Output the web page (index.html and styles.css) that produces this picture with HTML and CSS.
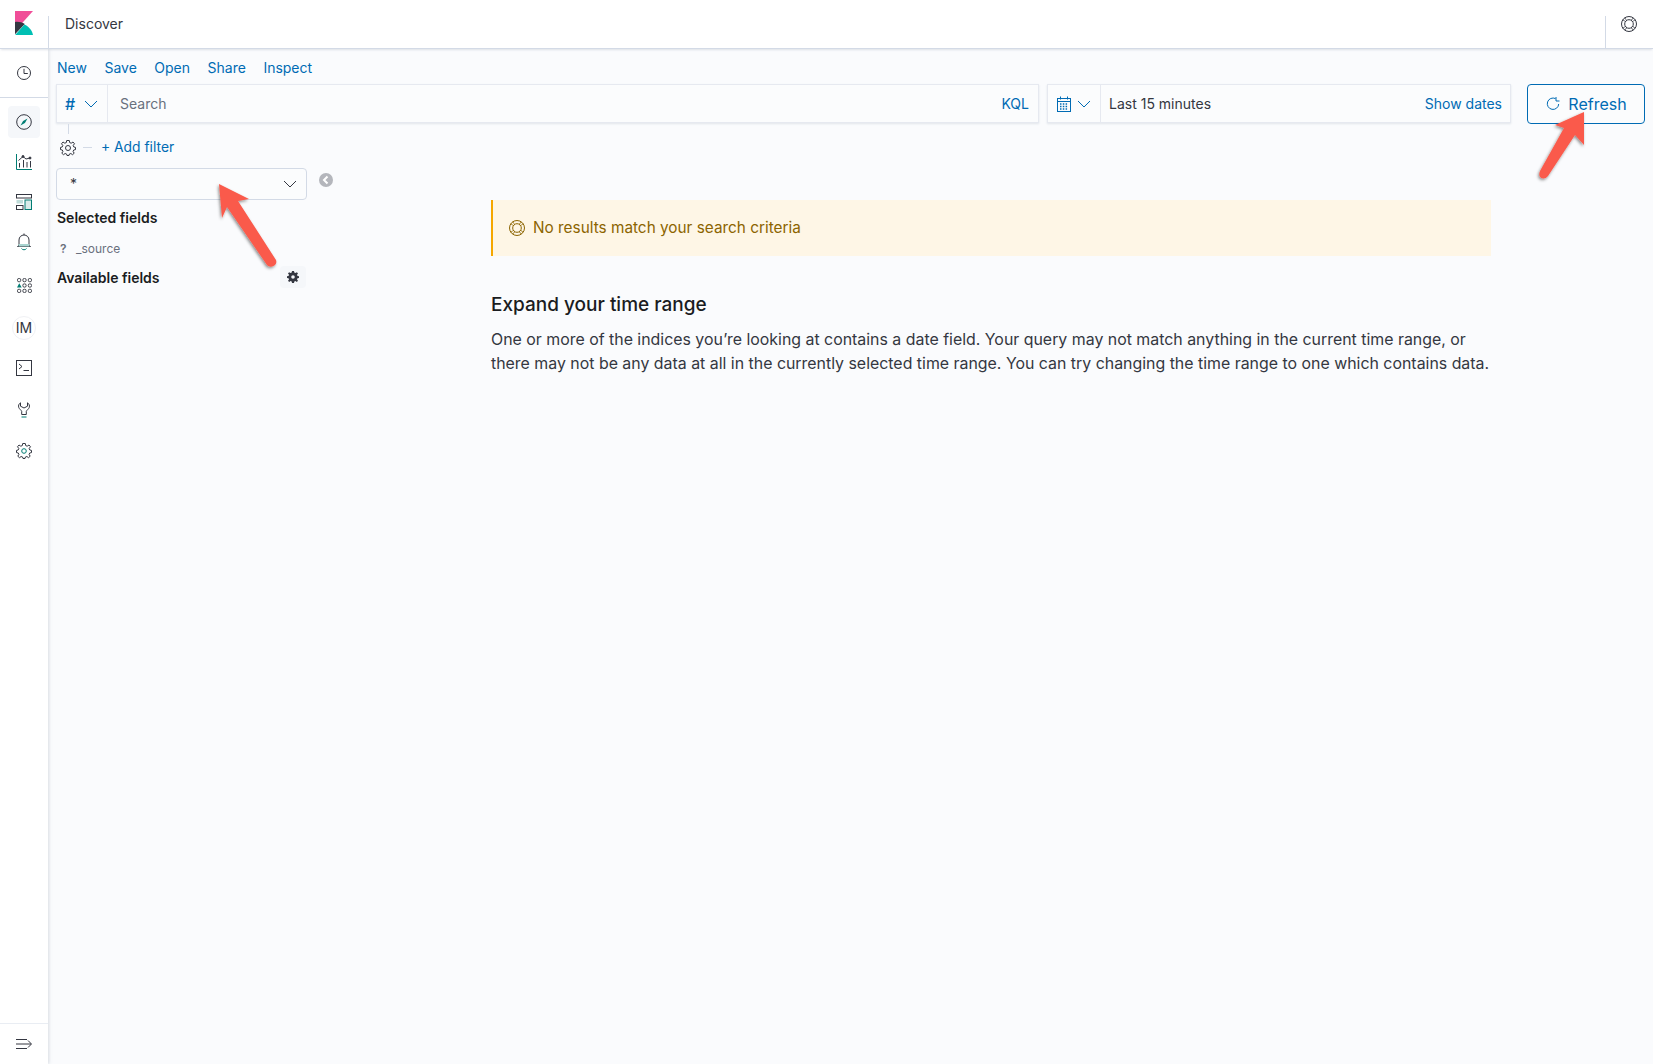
FILE: index.html
```html
<!DOCTYPE html>
<html lang="en">
<head>
<meta charset="utf-8">
<title>Discover - Kibana</title>
<link rel="stylesheet" href="styles.css">
</head>
<body>
<header class="header">
  <div class="logo-cell">
    <svg class="logo" viewBox="0 0 18 24" width="18" height="24"><path fill="#f04e98" d="M0 0H18L0 20Z"/><path fill="#343741" d="M0 11C3.500 10.500 7 11.300 9.800 13L0 23.200Z"/><path fill="#00bfb3" d="M9.400 13.500C13.800 15.500 17 19 18 24H0.200Z"/></svg>
  </div>
  <div class="crumb">Discover</div>
  <div class="help-cell">
    <svg class="ico" viewBox="0 0 16 16" width="16" height="16" fill="none" stroke="#343741"><circle cx="8" cy="8" r="7.500"/><circle cx="8" cy="8" r="4.300"/><path d="M3.600 2L5.500 3.900M2 3.600L3.900 5.500M12.400 2L10.500 3.900M14 3.600L12.100 5.500M3.600 14L5.500 12.100M2 12.400L3.900 10.500M12.400 14L10.500 12.100M14 12.400L12.100 10.500"/></svg>
  </div>
</header>
<div class="shell">
  <nav class="side">
    <div class="side-recent">
      <svg viewBox="0 0 16 16" width="16" height="16" fill="none" stroke="#343741"><circle cx="8" cy="8" r="6.500"/><path d="M8 3.800V8.500H11.800"/></svg>
    </div>
    <div class="side-links">
      <div class="side-item active"><svg viewBox="0 0 16 16" width="16" height="16" fill="none" stroke="#343741"><circle cx="8" cy="8" r="7.300"/><path d="M11.500 4.500L8.900 8.900L4.500 11.500L7.100 7.100Z" fill="#017d73" stroke="none"/></svg></div>
      <div class="side-item"><svg viewBox="0 0 16 16" width="16" height="16" fill="none" stroke="#343741"><path d="M0.500 0V15.500H16" stroke="#017d73"/><path d="M2.500 6.500L7 2.500L10 5L14 4"/><circle cx="7" cy="2.500" r="1" fill="#343741"/><circle cx="14" cy="4" r="1" fill="#343741"/><path d="M3.500 9V13.500M7.500 6V13.500M11 8V13.500M14.500 7V13.500"/></svg></div>
      <div class="side-item"><svg viewBox="0 0 16 16" width="16" height="16" fill="none" stroke="#343741"><rect x="0.500" y="0.500" width="15" height="3.500"/><rect x="0.500" y="6" width="6.500" height="3.500" fill="#bfdcd9" stroke="none"/><rect x="0.500" y="11.500" width="6.500" height="4"/><rect x="9" y="6" width="6.500" height="9.500" stroke="#017d73" fill="#d9ebe9"/></svg></div>
      <div class="side-item"><svg viewBox="0 0 14 18" width="14" height="18" fill="none" stroke="#343741"><path d="M7 0.500V2M2 12V7C2 4 4.300 2 7 2S12 4 12 7V12L13.500 13.500H0.500Z"/><path d="M1.500 11H12.500V13.500H1.500Z" fill="#a8d3cf" stroke="none"/><path d="M4.500 15.500C5.500 17.200 8.500 17.200 9.500 15.500" stroke="#017d73"/></svg></div>
      <div class="side-item gap-apps"><svg viewBox="0 0 16 16" width="15" height="15" fill="none" stroke="#343741"><rect x="0.500" y="0.500" width="3.500" height="3.500" rx="1.500"/><rect x="6.250" y="0.500" width="3.500" height="3.500" rx="1.500"/><rect x="12" y="0.500" width="3.500" height="3.500" rx="1.500"/><rect x="6.250" y="6.250" width="3.500" height="3.500" rx="1.500"/><rect x="12" y="6.250" width="3.500" height="3.500" rx="1.500"/><rect x="0.500" y="12" width="3.500" height="3.500" rx="1.500"/><rect x="6.250" y="12" width="3.500" height="3.500" rx="1.500"/><rect x="12" y="12" width="3.500" height="3.500" rx="1.500"/><path d="M2.400 5.500L5 10H0Z" fill="#017d73" stroke="none"/></svg></div>
      <div class="side-item gap-im"><span class="avatar">IM</span></div>
      <div class="side-item"><svg viewBox="0 0 16 16" width="16" height="16" fill="none" stroke="#343741"><rect x="0.500" y="0.500" width="15" height="15"/><path d="M3 4L6 6.500L3 9"/><path d="M7.500 10.500H13"/></svg></div>
      <div class="side-item gap-tool"><svg viewBox="0 0 14 16" width="14" height="16" fill="none" stroke="#343741"><path d="M3.500 0.800C1.800 1.800 1.200 3.700 1.700 5.300C2.200 7 4 7.800 4.700 9.300V12.500H9.300V9.300C10 7.800 11.800 7 12.300 5.300C12.800 3.700 12.200 1.800 10.500 0.800V4.200L7 6L3.500 4.200Z"/><path d="M4.500 15H9.500" stroke="#017d73"/></svg></div>
      <div class="side-item gap-set"><svg viewBox="0 0 16 16" width="16" height="16" fill="none" stroke="#343741"><path d="M6.700 0.500H9.300L9.700 2.600L11.200 3.200L13 2L14.500 3.800L13.200 5.400L13.800 7L15.500 7.400V9.600L13.700 10L13.100 11.500L14.200 13.200L12.500 14.700L10.900 13.500L9.400 14L9 15.500H7L6.600 14L5.100 13.500L3.500 14.700L1.800 13.200L2.900 11.500L2.300 10L0.500 9.600V7.400L2.200 7L2.800 5.400L1.500 3.800L3 2L4.800 3.200L6.300 2.600Z"/><circle cx="8" cy="8" r="2.300" stroke="#017d73"/></svg></div>
    </div>
    <div class="side-foot">
      <svg viewBox="0 0 16 16" width="16" height="16" fill="none" stroke="#343741"><path d="M0 3.500H11M0 8H15M0 12.500H11M12 4.500L15.500 8L12 11.500"/></svg>
    </div>
  </nav>
  <main class="main">
    <div class="menu">
      <a class="link">New</a><a class="link">Save</a><a class="link">Open</a><a class="link">Share</a><a class="link">Inspect</a>
    </div>
    <div class="query">
      <div class="field search">
        <div class="prepend"><span class="hash">#</span>
          <svg class="chev" viewBox="0 0 14 8" width="14" height="8" fill="none" stroke="#006bb4"><path d="M1 1L7 7L13 1"/></svg>
        </div>
        <div class="search-text">Search</div>
        <a class="link kql">KQL</a>
      </div>
      <div class="field date">
        <div class="prepend date-pre">
          <svg viewBox="0 0 14 16" width="14" height="16" fill="none" stroke="#006bb4"><rect x="0.500" y="2.500" width="13" height="13"/><path d="M3.500 0.500V3.500M10.500 0.500V3.500M0.500 5.500H13.500"/><path d="M3 8H11M3 10.500H11M3 13H11" stroke-width="1.500" stroke-dasharray="1.500 1.300"/></svg>
          <svg class="chev" viewBox="0 0 14 8" width="14" height="8" fill="none" stroke="#006bb4"><path d="M1 1L7 7L13 1"/></svg>
        </div>
        <div class="range">Last 15 minutes</div>
        <a class="link dates">Show dates</a>
      </div>
      <button class="refresh">
        <svg viewBox="0 0 14 14" width="14" height="14" fill="none" stroke="#006bb4"><path d="M9.500 1.600A5.700 5.700 0 1 0 12.700 7"/><path d="M10 0V4H13.500"/></svg>
        <span>Refresh</span>
      </button>
    </div>
    <div class="stem"></div>
    <div class="filters">
      <svg viewBox="0 0 16 16" width="16" height="16" fill="none" stroke="#343741"><path d="M6.700 0.500H9.300L9.700 2.600L11.200 3.200L13 2L14.500 3.800L13.200 5.400L13.800 7L15.500 7.400V9.600L13.700 10L13.100 11.500L14.200 13.200L12.500 14.700L10.900 13.500L9.400 14L9 15.500H7L6.600 14L5.100 13.500L3.500 14.700L1.800 13.200L2.900 11.500L2.300 10L0.500 9.600V7.400L2.200 7L2.800 5.400L1.500 3.800L3 2L4.800 3.200L6.300 2.600Z"/><circle cx="8" cy="8" r="2.500"/></svg>
      <span class="dash"></span>
      <a class="link add">+ Add filter</a>
    </div>
    <div class="body">
      <aside class="fields">
        <div class="index-row">
          <div class="index-select"><span>*</span>
            <svg viewBox="0 0 14 8" width="14" height="8" fill="none" stroke="#343741"><path d="M1 1L7 7L13 1"/></svg>
          </div>
          <svg class="collapse" viewBox="0 0 14 14" width="14" height="14"><circle cx="7" cy="7" r="7" fill="#b4b6bc"/><path d="M8.500 3.500L5 7L8.500 10.500" fill="none" stroke="#fff" stroke-width="2"/></svg>
        </div>
        <h3 class="fields-title">Selected fields</h3>
        <div class="field-row"><span class="q">?</span><span class="fname">_source</span></div>
        <div class="avail">
          <h3 class="fields-title">Available fields</h3>
          <span class="gear-btn">
            <svg viewBox="0 0 12 12" width="12" height="12"><path fill="#343741" fill-rule="evenodd" d="M5 0H7L7.300 1.600L8.500 2.100L9.900 1.200L11 2.600L10 3.800L10.500 5L12 5.200V7L10.500 7.300L10 8.500L11 9.800L9.800 11L8.500 10L7.300 10.500L7 12H5L4.700 10.500L3.500 10L2.200 11L1 9.800L2 8.500L1.500 7.300L0 7V5.200L1.500 5L2 3.800L1 2.600L2.100 1.200L3.500 2.100L4.700 1.600ZM6 4.200A1.800 1.800 0 1 0 6 7.800A1.800 1.800 0 1 0 6 4.200Z"/></svg>
          </span>
        </div>
      </aside>
      <section class="results">
        <div class="callout">
          <svg viewBox="0 0 16 16" width="16" height="16" fill="none" stroke="#8c6400"><circle cx="8" cy="8" r="7.500"/><circle cx="8" cy="8" r="4.300"/><path d="M3.600 2L5.500 3.900M2 3.600L3.900 5.500M12.400 2L10.500 3.900M14 3.600L12.100 5.500M3.600 14L5.500 12.100M2 12.400L3.900 10.500M12.400 14L10.500 12.100M14 12.400L12.100 10.500"/></svg>
          <span class="callout-text">No results match your search criteria</span>
        </div>
        <h2 class="expand">Expand your time range</h2>
        <p class="explain">One or more of the indices you’re looking at contains a date field. Your query may not match anything in the current time range, or there may not be any data at all in the currently selected time range. You can try changing the time range to one which contains data.</p>
      </section>
    </div>
  </main>
</div>
<svg class="arrows" viewBox="0 0 1653 1064" width="1653" height="1064">
  <defs><filter id="as" x="-30%" y="-30%" width="160%" height="160%"><feDropShadow dx="-1" dy="1.500" stdDeviation="1.500" flood-color="#000" flood-opacity=".45"/></filter></defs>
  <g fill="#fa5a4b" filter="url(#as)">
    <path d="M219 184L249 199L238 201L276 260C278 265 271 269 267 265L227 207L222 218Z"/>
    <path d="M1584 112L1584 145L1575 135L1548 176C1544 181 1537 178 1540 171L1564 128L1555 125Z"/>
  </g>
</svg>
</body>
</html>
```
FILE: styles.css
```css
* { box-sizing: border-box; }
html, body { margin: 0; height: 100%; }
body {
  width: 1653px;
  height: 1064px;
  overflow: hidden;
  display: flex;
  flex-direction: column;
  font-family: Inter, "Liberation Sans", sans-serif;
  font-size: 14px;
  color: #343741;
  background: #fafbfd;
}
svg { display: block; flex: none; }
.link { color: #006bb4; text-decoration: none; }

.header {
  flex: none;
  height: 49px;
  display: flex;
  background: #fff;
  border-bottom: 1px solid #d3dae6;
  box-shadow: 0 2px 2px -1px rgba(152, 162, 179, .3);
  position: relative;
  z-index: 2;
}
.logo-cell { width: 48px; padding: 11px 15px; position: relative; }
.logo-cell::after { content: ""; position: absolute; right: -1px; top: 16px; bottom: 0; width: 1px; background: #d3dae6; }
.crumb { flex: 1; padding-left: 17px; line-height: 48px; }
.help-cell { width: 48px; display: flex; justify-content: center; padding-top: 16px; position: relative; }
.help-cell::before { content: ""; position: absolute; left: 0; top: 16px; bottom: 0; width: 1px; background: #d3dae6; }

.shell { flex: 1; display: flex; min-height: 0; }
.side {
  flex: none;
  width: 48px;
  background: #fff;
  display: flex;
  flex-direction: column;
  box-shadow: 1px 0 3px rgba(152, 162, 179, .35);
  position: relative;
  z-index: 1;
}
.side-recent { height: 49px; display: flex; align-items: center; justify-content: center; border-bottom: 1px solid #d3dae6; }
.side-links { flex: 1; padding: 8px 8px 0; display: flex; flex-direction: column; gap: 8px; }
.side-item { width: 32px; height: 32px; display: flex; align-items: center; justify-content: center; border-radius: 4px; }
.side-item.active { background: #f5f7fa; }
.gap-apps { margin-top: 3px; }
.gap-im { margin-top: 3px; }
.gap-tool { margin-top: 2px; }
.gap-set { margin-top: 1px; }
.avatar { width: 24px; height: 24px; border-radius: 50%; border: 1px solid #f0f1f4; display: flex; align-items: center; justify-content: center; font-size: 14px; padding-bottom: 1px; }
.side-foot { height: 41px; display: flex; align-items: center; justify-content: center; border-top: 1px solid #e9edf3; }

.main { flex: 1; min-width: 0; padding: 0 8px; display: flex; flex-direction: column; }
.menu { height: 35px; display: flex; align-items: center; gap: 17.500px; padding-left: 1px; padding-top: 1px; }
.query { display: flex; height: 40px; }
.field {
  display: flex;
  align-items: center;
  height: 39px;
  background: #fbfcfd;
  border: 1px solid #e6e9f0;
  box-shadow: 0 1px 2px rgba(152, 162, 179, .25);
}
.search { width: 983px; }
.prepend { height: 100%; width: 51px; flex: none; display: flex; align-items: center; padding-left: 8px; gap: 9px; border-right: 1px solid #e6e9f0; }
.hash { color: #006bb4; font-size: 16px; font-weight: 500; }
.search-text { flex: 1; padding-left: 12px; color: #69707d; }
.kql { padding-right: 9px; }
.date { width: 464px; margin-left: 8px; }
.date-pre { width: 53px; padding-left: 9px; gap: 6px; }
.range { flex: 1; padding-left: 8px; }
.dates { padding-right: 8px; }
.refresh {
  width: 118px;
  height: 40px;
  margin-left: 16px;
  display: flex;
  align-items: center;
  justify-content: center;
  gap: 8px;
  padding: 0 0 1px;
  background: #fbfcfd;
  border: 1px solid #006bb4;
  border-radius: 4px;
  color: #006bb4;
  font: 16px Inter, "Liberation Sans", sans-serif;
}
.refresh svg { margin-left: 1px; }
.stem { width: 1px; height: 10px; margin-left: 12px; background: #d3dae6; }
.filters { height: 27px; display: flex; align-items: center; padding-left: 4px; }
.dash { width: 9px; height: 1px; margin: 0 9px 0 7px; background: #d3dae6; }
.add { position: relative; top: -1px; font-size: 13.850px; }

.body { flex: 1; display: flex; padding-top: 7px; }
.fields { width: 435px; flex: none; }
.index-row { display: flex; }
.index-select {
  width: 251px;
  height: 32px;
  display: flex;
  align-items: center;
  justify-content: space-between;
  padding: 0 9px 0 13px;
  background: #fbfcfd;
  border: 1px solid #d3dae6;
  border-radius: 4px;
}
.index-select span { position: relative; top: -1px; }
.collapse { margin: 5px 0 0 12px; }
.fields-title { margin: 0; padding-left: 1px; font-size: 14px; font-weight: 600; color: #1a1c21; line-height: 20px; }
.index-row + .fields-title { margin-top: 8px; }
.field-row { display: flex; align-items: center; height: 20px; margin-top: 10px; padding-left: 1px; font-size: 12px; color: #69707d; }
.q { width: 19px; padding-left: 3px; font-weight: 600; }
.avail { display: flex; align-items: center; justify-content: space-between; width: 250px; margin-top: 10px; }
.gear-btn { width: 26px; height: 22px; display: flex; align-items: center; justify-content: center; background: #f5f7fa; border-radius: 4px; margin-top: -3px; }

.results { width: 1000px; padding-top: 32px; }
.callout {
  display: flex;
  align-items: center;
  gap: 8px;
  height: 56px;
  padding-left: 16px;
  background: #fef6e6;
  border-left: 2px solid #f5a700;
  font-size: 15.350px;
  color: #8c6400;
}
.callout-text { position: relative; top: -1px; }
.expand { margin: 37px 0 0; font-size: 19px; line-height: 24px; font-weight: 500; color: #1a1c21; }
.explain { margin: 11px 0 0; font-size: 15.900px; line-height: 24px; color: #343741; }

.arrows { position: absolute; left: 0; top: 0; z-index: 5; pointer-events: none; }
```
